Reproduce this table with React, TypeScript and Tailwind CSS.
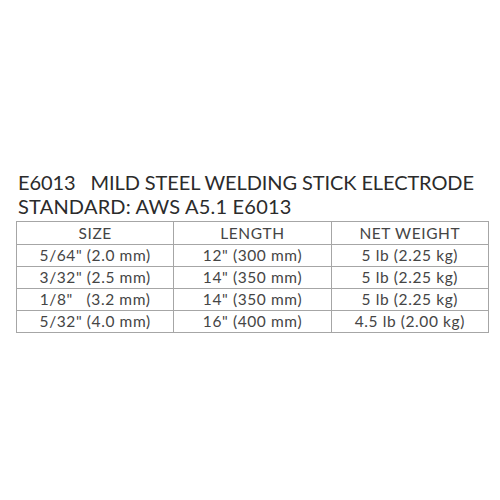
import React from 'react';

const rows = [
  ['5/64" (2.0 mm)', '12" (300 mm)', '5 lb (2.25 kg)'],
  ['3/32" (2.5 mm)', '14" (350 mm)', '5 lb (2.25 kg)'],
  ['1/8"   (3.2 mm)', '14" (350 mm)', '5 lb (2.25 kg)'],
  ['5/32" (4.0 mm)', '16" (400 mm)', '4.5 lb (2.00 kg)'],
];

const App: React.FC = () => {
  return (
    <div className="w-[500px] h-[500px] bg-white pt-[170px] px-4 text-[#2b2b2b] font-['Lato',sans-serif]">
      <div className="pl-[2px] text-[20px] leading-[24px]">
        <div className="whitespace-pre tracking-[-0.1px]">E6013   MILD STEEL WELDING STICK ELECTRODE</div>
        <div className="tracking-[0.2px]">STANDARD: AWS A5.1 E6013</div>
      </div>
      <table className="mt-[3px] w-[473px] border-collapse table-fixed text-[15.5px] text-[#454545] tracking-[0.6px]">
        <thead>
          <tr className="h-[23px]">
            <th className="border border-[#a6a6a6] font-normal leading-none pt-[2px]">SIZE</th>
            <th className="border border-[#a6a6a6] font-normal leading-none pt-[2px]">LENGTH</th>
            <th className="border border-[#a6a6a6] font-normal leading-none pt-[2px]">NET WEIGHT</th>
          </tr>
        </thead>
        <tbody>
          {rows.map((r, i) => (
            <tr key={i} className="h-[22px]">
              {r.map((c, j) => (
                <td key={j} className="border border-[#a6a6a6] text-center whitespace-pre leading-none pt-[1px]">
                  {c}
                </td>
              ))}
            </tr>
          ))}
        </tbody>
      </table>
    </div>
  );
};

export default App;
